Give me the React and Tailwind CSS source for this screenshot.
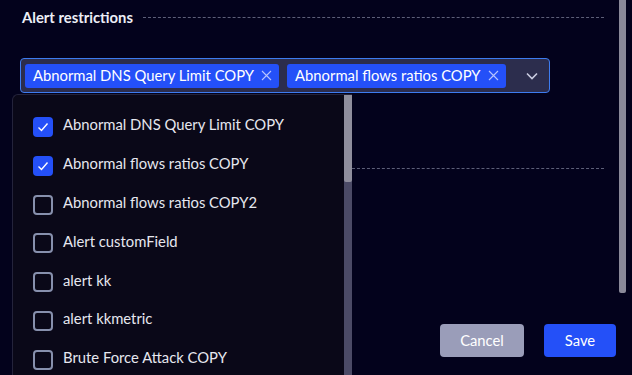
import React from 'react';

const options = [
  { label: 'Abnormal DNS Query Limit COPY', checked: true },
  { label: 'Abnormal flows ratios COPY', checked: true },
  { label: 'Abnormal flows ratios COPY2', checked: false },
  { label: 'Alert customField', checked: false },
  { label: 'alert kk', checked: false },
  { label: 'alert kkmetric', checked: false },
  { label: 'Brute Force Attack COPY', checked: false },
];

function Chip({ label }) {
  return (
    <div className="flex shrink-0 whitespace-nowrap items-center h-[24px] pl-[8px] pr-[7px] rounded-[3px] bg-[#2450f8] text-white text-[14.8px] gap-[7px]">
      <span>{label}</span>
      <svg width="11" height="11" viewBox="0 0 11 11" stroke="#b7c4ff" strokeWidth="1.1">
        <path d="M1 1L10 10M10 1L1 10" />
      </svg>
    </div>
  );
}

function Checkbox({ checked }) {
  if (checked) {
    return (
      <div className="w-[20px] h-[20px] rounded-[4px] bg-[#2450f8] flex items-center justify-center">
        <svg width="14" height="14" viewBox="0 0 14 14" fill="none" stroke="white" strokeWidth="1.4">
          <path d="M2.5 7.5L5.5 10.5L11.5 3.5" />
        </svg>
      </div>
    );
  }
  return <div className="w-[20px] h-[20px] rounded-[4px] border-2 border-[#8790ad]" />;
}

export default function App() {
  return (
    <div className="h-[375px] w-[632px] bg-[#03021c] flex overflow-hidden text-white" style={{ fontFamily: 'Lato, "Noto Sans", sans-serif' }}>
      <div className="relative flex-1 flex flex-col pl-[20px] pr-[15px]">
        <div className="flex items-center h-[34px] pl-[2px]">
          <span className="font-bold text-[14.8px] text-[#eceef6]">Alert restrictions</span>
          <div className="flex-1 ml-[10px] border-t border-dashed border-[#5d5f78]" />
        </div>

        <div className="mt-[24px] w-[530px] h-[35px] rounded-[4px] border border-[#3d7cf0] bg-[#2c2d4d] flex items-center pl-[4px] pr-[10px] gap-[8px]">
          <Chip label="Abnormal DNS Query Limit COPY" />
          <Chip label="Abnormal flows ratios COPY" />
          <div className="flex-1" />
          <svg width="14" height="14" viewBox="0 0 14 14" fill="none" stroke="#c9cbe0" strokeWidth="1.6">
            <path d="M2 4.5L7 9.5L12 4.5" />
          </svg>
        </div>

        <div className="flex items-center mt-[58px] h-[34px] pl-[332px]">
          <div className="flex-1 border-t border-dashed border-[#5d5f78]" />
        </div>

        <div className="flex-1" />

        <div className="flex justify-end gap-[20px] mb-[18px] -mr-[12px]">
          <button className="w-[84px] h-[33px] rounded-[4px] bg-[#9a9db9] text-white text-[14.8px]">Cancel</button>
          <button className="w-[72px] h-[33px] rounded-[4px] bg-[#2450f8] text-white text-[14.8px]">Save</button>
        </div>

        <div className="absolute left-[12px] top-[94px] w-[340px] h-[290px] rounded-tl-[6px] border-l border-t border-[#24233b] bg-[#0a0818] flex">
          <div className="flex-1 flex flex-col pl-[20px] pt-[22px] gap-[18.8px]">
            {options.map((o) => (
              <div key={o.label} className="flex items-center gap-[10px] h-[20px]">
                <Checkbox checked={o.checked} />
                <span className="text-[14.8px] text-[#e6e7ef] -mt-[5px]">{o.label}</span>
              </div>
            ))}
          </div>
          <div className="w-[8px] bg-[#4b4a66] flex flex-col">
            <div className="h-[87px] bg-[#8f8e9d] rounded-b-[2px]" />
          </div>
        </div>
      </div>
      <div className="w-[13px] flex flex-col">
        <div className="w-[7px] h-[293px] bg-[#8a8999] rounded-b-[2px]" />
      </div>
    </div>
  );
}
